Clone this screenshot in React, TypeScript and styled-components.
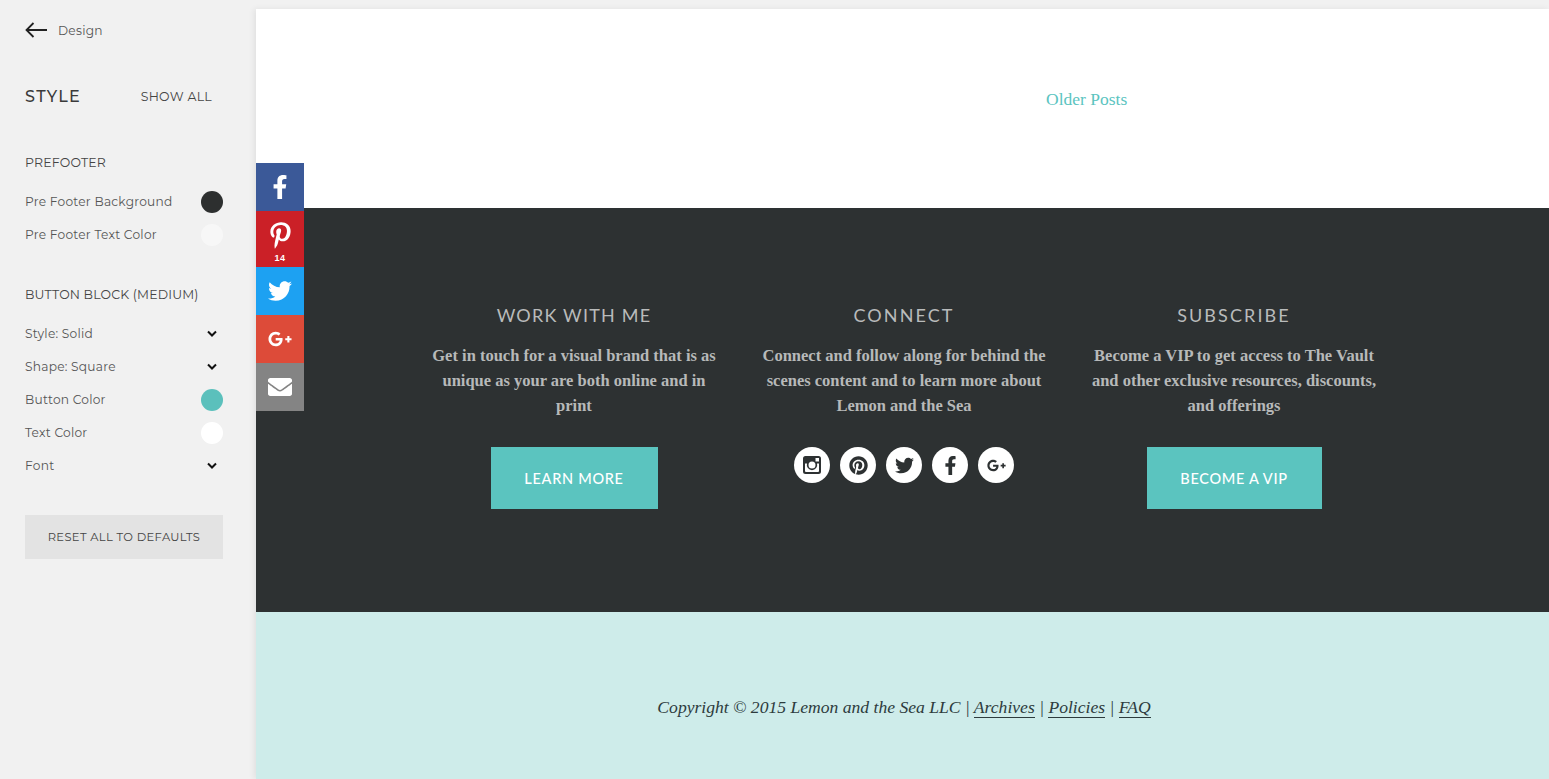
import React from "react";
import styled, { createGlobalStyle } from "styled-components";
import { FaEnvelope, FaFacebookF, FaGooglePlusG, FaPinterest, FaPinterestP, FaTwitter } from "react-icons/fa";

const GlobalStyle = createGlobalStyle`
  html, body {
    margin: 0;
    height: 100%;
    overflow: hidden;
    background: #f1f1f1;
  }
`;

const Page = styled.div`
  display: flex;
  width: 1549px;
  height: 779px;
  overflow: hidden;
`;

const Sidebar = styled.aside`
  width: 256px;
  flex: none;
  box-sizing: border-box;
  padding: 20px 33px 0 25px;
  background: #f1f1f1;
  font-family: "Montserrat", "Inter", "Liberation Sans", sans-serif;
  color: #4a4a4a;
`;

const BackRow = styled.div`
  display: flex;
  align-items: center;
  gap: 11px;
  height: 20px;
  font-size: 12.2px;
  letter-spacing: 0.25px;
  color: #555;
`;

const StyleHeader = styled.div`
  display: flex;
  justify-content: space-between;
  align-items: center;
  height: 20px;
  margin-top: 46px;
  padding-right: 11px;
`;

const StyleTitle = styled.h2`
  margin: 0;
  font-size: 16px;
  font-weight: 500;
  letter-spacing: 1.35px;
  color: #3a3a3a;
`;

const ShowAll = styled.span`
  font-size: 12.5px;
  letter-spacing: 0.3px;
  color: #444;
`;

const SectionTitle = styled.h3<{ $top: number }>`
  margin: ${(p) => p.$top}px 0 0;
  height: 20px;
  line-height: 20px;
  font-size: 12.5px;
  font-weight: 400;
  letter-spacing: 0.17px;
  color: #444;
`;

const OptionList = styled.div`
  display: flex;
  flex-direction: column;
  margin-top: 12px;
`;

const OptionRow = styled.div`
  display: flex;
  justify-content: space-between;
  align-items: center;
  height: 33px;
  font-size: 12.2px;
  letter-spacing: 0.25px;
  color: #555;
`;

const Swatch = styled.span<{ $color: string }>`
  width: 22px;
  height: 22px;
  border-radius: 50%;
  background: ${(p) => p.$color};
`;

const Chevron = styled.svg`
  width: 22px;
  height: 8px;
  fill: none;
  stroke: #111;
  stroke-width: 2;
`;

const ResetButton = styled.button`
  display: block;
  width: 198px;
  height: 44px;
  margin-top: 33px;
  padding: 0;
  border: 0;
  background: #e3e3e3;
  font-family: inherit;
  font-size: 11.5px;
  letter-spacing: 0.36px;
  color: #444;
`;

const Main = styled.main`
  position: relative;
  flex: 1;
  display: flex;
  flex-direction: column;
  margin-top: 9px;
  box-shadow: -2px 0 6px rgba(0, 0, 0, 0.07);
`;

const PagerSection = styled.section`
  height: 199px;
  box-sizing: border-box;
  padding: 80px 0 0 790px;
  background: #fff;
`;

const OlderPosts = styled.a`
  font-family: "Georgia", "Liberation Serif", serif;
  font-size: 17.5px;
  line-height: 20px;
  color: #5bc4bf;
`;

const ShareBar = styled.div`
  position: absolute;
  top: 154px;
  left: 0;
  display: flex;
  flex-direction: column;
  width: 48px;
`;

const ShareButton = styled.a<{ $color: string }>`
  display: flex;
  align-items: center;
  justify-content: center;
  height: 48px;
  background: ${(p) => p.$color};
  color: #fff;
  font-size: 24px;
`;

const PinButton = styled.a`
  display: flex;
  flex-direction: column;
  align-items: center;
  height: 56px;
  box-sizing: border-box;
  padding-top: 11px;
  background: #cb2027;
  color: #fff;
  font-size: 27px;
`;

const ShareCount = styled.span`
  margin-top: 4px;
  font-family: "Liberation Sans", sans-serif;
  font-size: 9px;
  font-weight: 700;
  line-height: 10px;
  letter-spacing: 0.5px;
`;

const PreFooter = styled.section`
  display: flex;
  justify-content: center;
  height: 404px;
  box-sizing: border-box;
  padding: 95px 0 0 3px;
  background: #2d3132;
`;

const Column = styled.div`
  display: flex;
  flex-direction: column;
  align-items: center;
  width: 330px;
  box-sizing: border-box;
  padding: 0 22px;
  text-align: center;
`;

const ColumnTitle = styled.h2<{ $spacing?: number }>`
  margin: 0;
  font-family: "Lato", sans-serif;
  font-size: 18px;
  font-weight: 400;
  line-height: 24px;
  letter-spacing: ${(p) => p.$spacing ?? 2.1}px;
  color: #b9bbbb;
`;

const ColumnText = styled.p`
  margin: 16px 0 0;
  font-family: "Liberation Serif", serif;
  font-size: 16.5px;
  font-weight: 700;
  line-height: 25px;
  color: #b7b9b9;
`;

const CtaButton = styled.a<{ $width: number }>`
  display: flex;
  align-items: center;
  justify-content: center;
  width: ${(p) => p.$width}px;
  height: 62px;
  margin-top: 29px;
  background: #5bc4bf;
  font-family: "Lato", sans-serif;
  font-size: 14.5px;
  font-weight: 500;
  letter-spacing: 0.7px;
  color: #fff;
`;

const SocialRow = styled.div`
  display: flex;
  gap: 10px;
  margin-top: 29px;
`;

const SocialCircle = styled.a`
  display: flex;
  align-items: center;
  justify-content: center;
  width: 36px;
  height: 36px;
  border-radius: 50%;
  background: #fff;
  color: #2d3132;
  font-size: 19px;
`;

const CopyrightSection = styled.footer`
  flex: 1;
  display: flex;
  justify-content: center;
  box-sizing: border-box;
  padding: 84px 0 0 3px;
  background: #ceecea;
  font-family: "Liberation Serif", serif;
  font-style: italic;
  font-size: 17.6px;
  line-height: 22px;
  color: #2d3b3d;
`;

const FooterLink = styled.a`
  border-bottom: 1px solid #2d3b3d;
`;

function InstagramIcon() {
  return (
    <svg width="18" height="18" viewBox="0 0 18 18" aria-hidden="true">
      <path
        fill="currentColor"
        fillRule="evenodd"
        d="M2.500 0h13A2.500 2.500 0 0 1 18 2.500v13a2.500 2.500 0 0 1-2.500 2.500h-13A2.500 2.500 0 0 1 0 15.500v-13A2.500 2.500 0 0 1 2.500 0zM12.500 2v3.500h3.500V2zM2 7.500V15a1 1 0 0 0 1 1h12a1 1 0 0 0 1-1V7.500h-2a5.200 5.200 0 1 1-10 0zM9 5.500a3.500 3.500 0 1 0 0 7 3.500 3.500 0 0 0 0-7z"
      />
    </svg>
  );
}

function ChevronDown() {
  return (
    <Chevron viewBox="0 0 22 8">
      <path d="M7 1.500l4 4 4-4" />
    </Chevron>
  );
}

export default function App() {
  return (
    <Page>
      <GlobalStyle />
      <Sidebar>
        <BackRow>
          <svg width="22" height="16" viewBox="0 0 22 16" fill="none" stroke="#222" strokeWidth="1.8">
            <path d="M22 8H1.500M8.500 1L1.500 8l7 7" />
          </svg>
          Design
        </BackRow>
        <StyleHeader>
          <StyleTitle>STYLE</StyleTitle>
          <ShowAll>SHOW ALL</ShowAll>
        </StyleHeader>
        <SectionTitle $top={47}>PREFOOTER</SectionTitle>
        <OptionList>
          <OptionRow>Pre Footer Background<Swatch $color="#2d2f2f" /></OptionRow>
          <OptionRow>Pre Footer Text Color<Swatch $color="#f7f7f7" /></OptionRow>
        </OptionList>
        <SectionTitle $top={34}>BUTTON BLOCK (MEDIUM)</SectionTitle>
        <OptionList>
          <OptionRow>Style: Solid<ChevronDown /></OptionRow>
          <OptionRow>Shape: Square<ChevronDown /></OptionRow>
          <OptionRow>Button Color<Swatch $color="#5bc0bc" /></OptionRow>
          <OptionRow>Text Color<Swatch $color="#ffffff" /></OptionRow>
          <OptionRow>Font<ChevronDown /></OptionRow>
        </OptionList>
        <ResetButton>RESET ALL TO DEFAULTS</ResetButton>
      </Sidebar>
      <Main>
        <ShareBar>
          <ShareButton $color="#3b5998"><FaFacebookF /></ShareButton>
          <PinButton>
            <FaPinterestP />
            <ShareCount>14</ShareCount>
          </PinButton>
          <ShareButton $color="#1da1f2"><FaTwitter /></ShareButton>
          <ShareButton $color="#dd4b39"><FaGooglePlusG /></ShareButton>
          <ShareButton $color="#848484"><FaEnvelope /></ShareButton>
        </ShareBar>
        <PagerSection>
          <OlderPosts>Older Posts</OlderPosts>
        </PagerSection>
        <PreFooter>
          <Column>
            <ColumnTitle $spacing={1.2}>WORK WITH ME</ColumnTitle>
            <ColumnText>Get in touch for a visual brand that is as unique as your are both online and in print</ColumnText>
            <CtaButton $width={167}>LEARN MORE</CtaButton>
          </Column>
          <Column>
            <ColumnTitle>CONNECT</ColumnTitle>
            <ColumnText>Connect and follow along for behind the scenes content and to learn more about Lemon and the Sea</ColumnText>
            <SocialRow>
              <SocialCircle><InstagramIcon /></SocialCircle>
              <SocialCircle><FaPinterest /></SocialCircle>
              <SocialCircle><FaTwitter /></SocialCircle>
              <SocialCircle><FaFacebookF /></SocialCircle>
              <SocialCircle><FaGooglePlusG /></SocialCircle>
            </SocialRow>
          </Column>
          <Column>
            <ColumnTitle>SUBSCRIBE</ColumnTitle>
            <ColumnText>Become a VIP to get access to The Vault and other exclusive resources, discounts, and offerings</ColumnText>
            <CtaButton $width={175}>BECOME A VIP</CtaButton>
          </Column>
        </PreFooter>
        <CopyrightSection>
          <span>
            Copyright © 2015 Lemon and the Sea LLC | <FooterLink>Archives</FooterLink> | <FooterLink>Policies</FooterLink> | <FooterLink>FAQ</FooterLink>
          </span>
        </CopyrightSection>
      </Main>
    </Page>
  );
}
